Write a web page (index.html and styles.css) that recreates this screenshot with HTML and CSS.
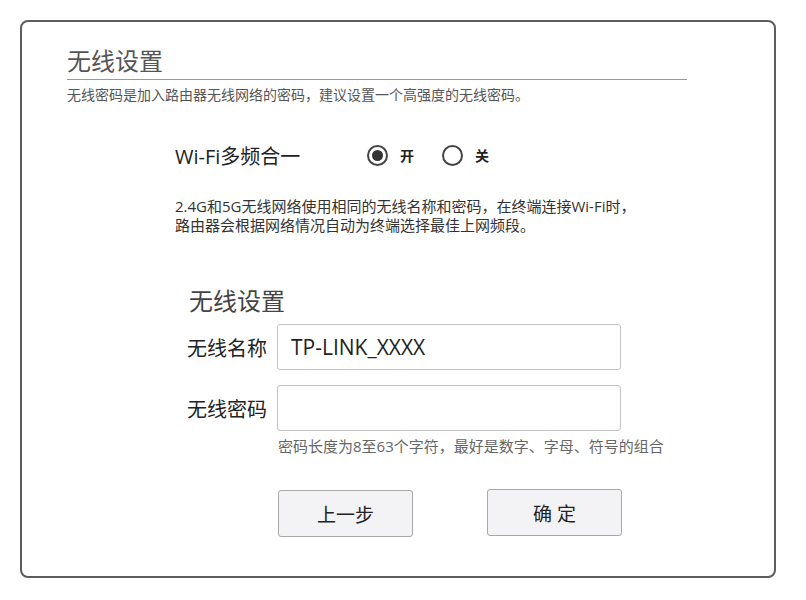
FILE: index.html
```html
<!DOCTYPE html>
<html lang="zh-CN">
<head>
<meta charset="utf-8">
<title>无线设置</title>
<link rel="stylesheet" href="styles.css">
</head>
<body>
<div class="card">
  <div class="header">
    <h1 class="title">无线设置</h1>
  </div>
  <p class="subtitle">无线密码是加入路由器无线网络的密码，建议设置一个高强度的无线密码。</p>

  <div class="section">
    <div class="wifi-row">
      <span class="wifi-label">Wi-Fi多频合一</span>
      <span class="radio checked"></span>
      <span class="radio-text">开</span>
      <span class="radio"></span>
      <span class="radio-text">关</span>
    </div>
    <p class="desc">2.4G和5G无线网络使用相同的无线名称和密码，在终端连接Wi-Fi时，<br>路由器会根据网络情况自动为终端选择最佳上网频段。</p>
  </div>

  <div class="form">
    <h2 class="form-title">无线设置</h2>
    <div class="field">
      <span class="field-label">无线名称</span>
      <div class="input">TP-LINK_XXXX</div>
    </div>
    <div class="field second">
      <span class="field-label">无线密码</span>
      <div class="input"></div>
    </div>
    <p class="hint">密码长度为8至63个字符，最好是数字、字母、符号的组合</p>
  </div>

  <div class="buttons">
    <div class="btn">上一步</div>
    <div class="btn btn-ok">确 定</div>
  </div>
</div>
</body>
</html>
```

FILE: styles.css
```css
html, body {
  margin: 0;
  padding: 0;
  background: #ffffff;
}
body {
  font-family: "Open Sans", "Noto Sans CJK SC", sans-serif;
  color: #333;
}
.card {
  box-sizing: border-box;
  margin: 20px 0 0 20px;
  width: 756px;
  height: 558px;
  border: 2px solid #5c5c5c;
  border-radius: 8px;
  padding: 23px 0 0 45px;
}
.header {
  width: 620px;
  border-bottom: 1px solid #9a9a9a;
}
.title {
  margin: 0;
  font-weight: normal;
  font-size: 24px;
  line-height: 32px;
  padding-bottom: 2px;
  color: #555;
}
.subtitle {
  margin: 6px 0 0 0;
  font-size: 14px;
  line-height: 18px;
  color: #555;
}
.section {
  padding-left: 108px;
}
.wifi-row {
  display: flex;
  align-items: center;
  height: 24px;
  margin-top: 39px;
}
.wifi-label {
  width: 192px;
  font-size: 20px;
  color: #222;
}
.radio {
  box-sizing: border-box;
  width: 21px;
  height: 21px;
  border: 2px solid #444;
  border-radius: 50%;
  display: flex;
  align-items: center;
  justify-content: center;
}
.radio.checked::after {
  content: "";
  width: 11px;
  height: 11px;
  border-radius: 50%;
  background: #333;
}
.radio-text {
  margin-left: 12px;
  font-size: 14px;
  font-weight: bold;
  color: #222;
  width: 42px;
}
.desc {
  margin: 30px 0 0 0;
  font-size: 15px;
  line-height: 19px;
  color: #333;
}
.form {
  padding-left: 120px;
}
.form-title {
  margin: 50px 0 0 2px;
  font-weight: normal;
  font-size: 24px;
  line-height: 32px;
  color: #444;
}
.field {
  display: flex;
  align-items: center;
  margin-top: 7px;
}
.field.second {
  margin-top: 15px;
}
.field-label {
  width: 90px;
  font-size: 20px;
  color: #222;
}
.input {
  box-sizing: border-box;
  width: 344px;
  height: 46px;
  border: 1px solid #c4c4c4;
  border-radius: 3px;
  padding-left: 13px;
  font-size: 21px;
  line-height: 44px;
  color: #222;
}
.hint {
  margin: 5px 0 0 91px;
  font-size: 15px;
  line-height: 20px;
  color: #666;
}
.buttons {
  display: flex;
  gap: 74px;
  margin-top: 34px;
  padding-left: 211px;
}
.btn {
  box-sizing: border-box;
  width: 135px;
  height: 47px;
  border: 1px solid #a8a8a8;
  border-radius: 3px;
  background: #f3f3f6;
  display: flex;
  align-items: center;
  justify-content: center;
  font-size: 19px;
  color: #222;
}
.btn-ok {
  margin-top: -1px;
}
```
